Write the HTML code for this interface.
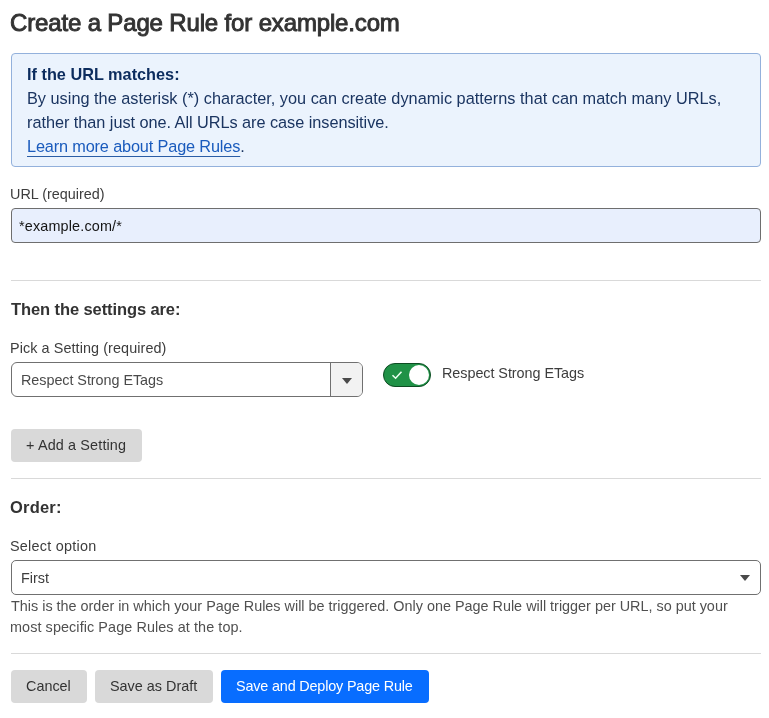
<!DOCTYPE html>
<html><head><meta charset="utf-8">
<style>
*{box-sizing:border-box;margin:0;padding:0}
html,body{width:769px;height:718px;overflow:hidden;background:#fff}
body{font-family:"Liberation Sans",sans-serif;color:#333;position:relative}
.tx{position:absolute;white-space:nowrap}
.lnk{color:#1a5bbd;text-decoration:underline;text-underline-offset:4px;text-decoration-thickness:1px;text-decoration-color:#2a5da6}
.box{position:absolute}
.tx{will-change:transform}

</style></head><body>
<div class="box" style="left:11px;top:53px;width:750px;height:114px;background:#ebf3fd;border:1px solid #93b1dc;border-radius:4px"></div>
<div class="box" style="left:11px;top:208px;width:750px;height:35px;background:#e8effd;border:1px solid #6e6e6e;border-radius:4px"></div>
<div class="box" style="left:11px;top:280px;width:750px;height:1px;background:#d9d9d9"></div>
<div class="box" style="left:11px;top:362px;width:352px;height:35px;background:#fff;border:1px solid #707070;border-radius:6px;overflow:hidden">
  <div class="box" style="left:318px;top:0;width:32px;height:33px;background:#f2f2f2;border-left:1px solid #707070"></div>
  <svg class="box" style="left:330px;top:15px" width="10" height="6" viewBox="0 0 10 6"><path d="M0 0H10L5 6Z" fill="#4a4a4a"/></svg>
</div>
<div class="box" style="left:383px;top:363px;width:48px;height:24px;background:#209247;border:1.5px solid #0e4c23;border-radius:12px"></div>
<div class="box" style="left:409px;top:365px;width:20px;height:20px;background:#fff;border-radius:50%"></div>
<svg class="box" style="left:391px;top:370px" width="12" height="10" viewBox="0 0 12 10"><path d="M1.5 5.2L4.6 8.2L10.5 1.8" fill="none" stroke="#eafff0" stroke-width="1.6"/></svg>
<div class="box" style="left:11px;top:429px;width:131px;height:33px;background:#d9d9d9;border-radius:4px"></div>
<div class="box" style="left:11px;top:478px;width:750px;height:1px;background:#d9d9d9"></div>
<div class="box" style="left:11px;top:560px;width:750px;height:35px;background:#fff;border:1px solid #707070;border-radius:5px"></div>
<svg class="box" style="left:740px;top:575px" width="10" height="6" viewBox="0 0 10 6"><path d="M0 0H10L5 6Z" fill="#4a4a4a"/></svg>
<div class="box" style="left:11px;top:653px;width:750px;height:1px;background:#d9d9d9"></div>
<div class="box" style="left:11px;top:670px;width:76px;height:33px;background:#d9d9d9;border-radius:4px"></div>
<div class="box" style="left:95px;top:670px;width:118px;height:33px;background:#d9d9d9;border-radius:4px"></div>
<div class="box" style="left:221px;top:670px;width:208px;height:33px;background:#086dff;border-radius:4px"></div>

<div class="tx" id="title" style="left:10.00px;top:10.68px;font-size:24px;line-height:24px;font-weight:normal;color:#333333;letter-spacing:-0.152px;-webkit-text-stroke:0.95px #333333;">Create a Page Rule for example.com</div>
<div class="tx" id="info_h" style="left:27.00px;top:66.20px;font-size:16.3px;line-height:16.3px;font-weight:bold;color:#0c2c5e;letter-spacing:0.000px;">If the URL matches:</div>
<div class="tx" id="info_l1" style="left:27.00px;top:90.20px;font-size:16.3px;line-height:16.3px;font-weight:normal;color:#1b3561;letter-spacing:0.011px;">By using the asterisk (*) character, you can create dynamic patterns that can match many URLs,</div>
<div class="tx" id="info_l2" style="left:27.00px;top:114.20px;font-size:16.3px;line-height:16.3px;font-weight:normal;color:#1b3561;letter-spacing:-0.039px;">rather than just one. All URLs are case insensitive.</div>
<div class="tx" id="info_l3" style="left:27.00px;top:138.20px;font-size:16.3px;line-height:16.3px;font-weight:normal;color:#1b3561;letter-spacing:-0.148px;"><span class="lnk">Learn more about Page Rules</span>.</div>
<div class="tx" id="url_lbl" style="left:10.00px;top:186.81px;font-size:14.4px;line-height:14.4px;font-weight:normal;color:#3d3d3d;letter-spacing:0.000px;">URL (required)</div>
<div class="tx" id="url_val" style="left:19.00px;top:218.81px;font-size:14.4px;line-height:14.4px;font-weight:normal;color:#141414;letter-spacing:0.154px;">*example.com/*</div>
<div class="tx" id="then" style="left:11.00px;top:301.03px;font-size:16.5px;line-height:16.5px;font-weight:bold;color:#333333;letter-spacing:-0.095px;">Then the settings are:</div>
<div class="tx" id="pick" style="left:10.00px;top:340.81px;font-size:14.4px;line-height:14.4px;font-weight:normal;color:#3d3d3d;letter-spacing:0.083px;">Pick a Setting (required)</div>
<div class="tx" id="sel_txt" style="left:21.00px;top:372.81px;font-size:14.4px;line-height:14.4px;font-weight:normal;color:#4a4a4a;letter-spacing:-0.053px;">Respect Strong ETags</div>
<div class="tx" id="tog_lbl" style="left:442.00px;top:365.81px;font-size:14.4px;line-height:14.4px;font-weight:normal;color:#3d3d3d;letter-spacing:-0.053px;">Respect Strong ETags</div>
<div class="tx" id="add" style="left:26.00px;top:437.81px;font-size:14.4px;line-height:14.4px;font-weight:normal;color:#333333;letter-spacing:0.143px;">+ Add a Setting</div>
<div class="tx" id="order" style="left:10.00px;top:499.03px;font-size:16.5px;line-height:16.5px;font-weight:bold;color:#333333;letter-spacing:0.200px;">Order:</div>
<div class="tx" id="selopt" style="left:10.00px;top:538.81px;font-size:14.4px;line-height:14.4px;font-weight:normal;color:#3d3d3d;letter-spacing:0.250px;">Select option</div>
<div class="tx" id="first" style="left:21.00px;top:570.81px;font-size:14.4px;line-height:14.4px;font-weight:normal;color:#3d3d3d;letter-spacing:0.000px;">First</div>
<div class="tx" id="help1" style="left:11.00px;top:598.81px;font-size:14.4px;line-height:14.4px;font-weight:normal;color:#505050;letter-spacing:0.000px;">This is the order in which your Page Rules will be triggered. Only one Page Rule will trigger per URL, so put your</div>
<div class="tx" id="help2" style="left:10.00px;top:619.81px;font-size:14.4px;line-height:14.4px;font-weight:normal;color:#505050;letter-spacing:0.086px;">most specific Page Rules at the top.</div>
<div class="tx" id="cancel" style="left:26.00px;top:678.81px;font-size:14.4px;line-height:14.4px;font-weight:normal;color:#333333;letter-spacing:0.000px;">Cancel</div>
<div class="tx" id="draft" style="left:110.00px;top:678.81px;font-size:14.4px;line-height:14.4px;font-weight:normal;color:#333333;letter-spacing:0.000px;">Save as Draft</div>
<div class="tx" id="deploy" style="left:236.00px;top:678.81px;font-size:14.4px;line-height:14.4px;font-weight:normal;color:#ffffff;letter-spacing:-0.167px;">Save and Deploy Page Rule</div>
</body></html>
